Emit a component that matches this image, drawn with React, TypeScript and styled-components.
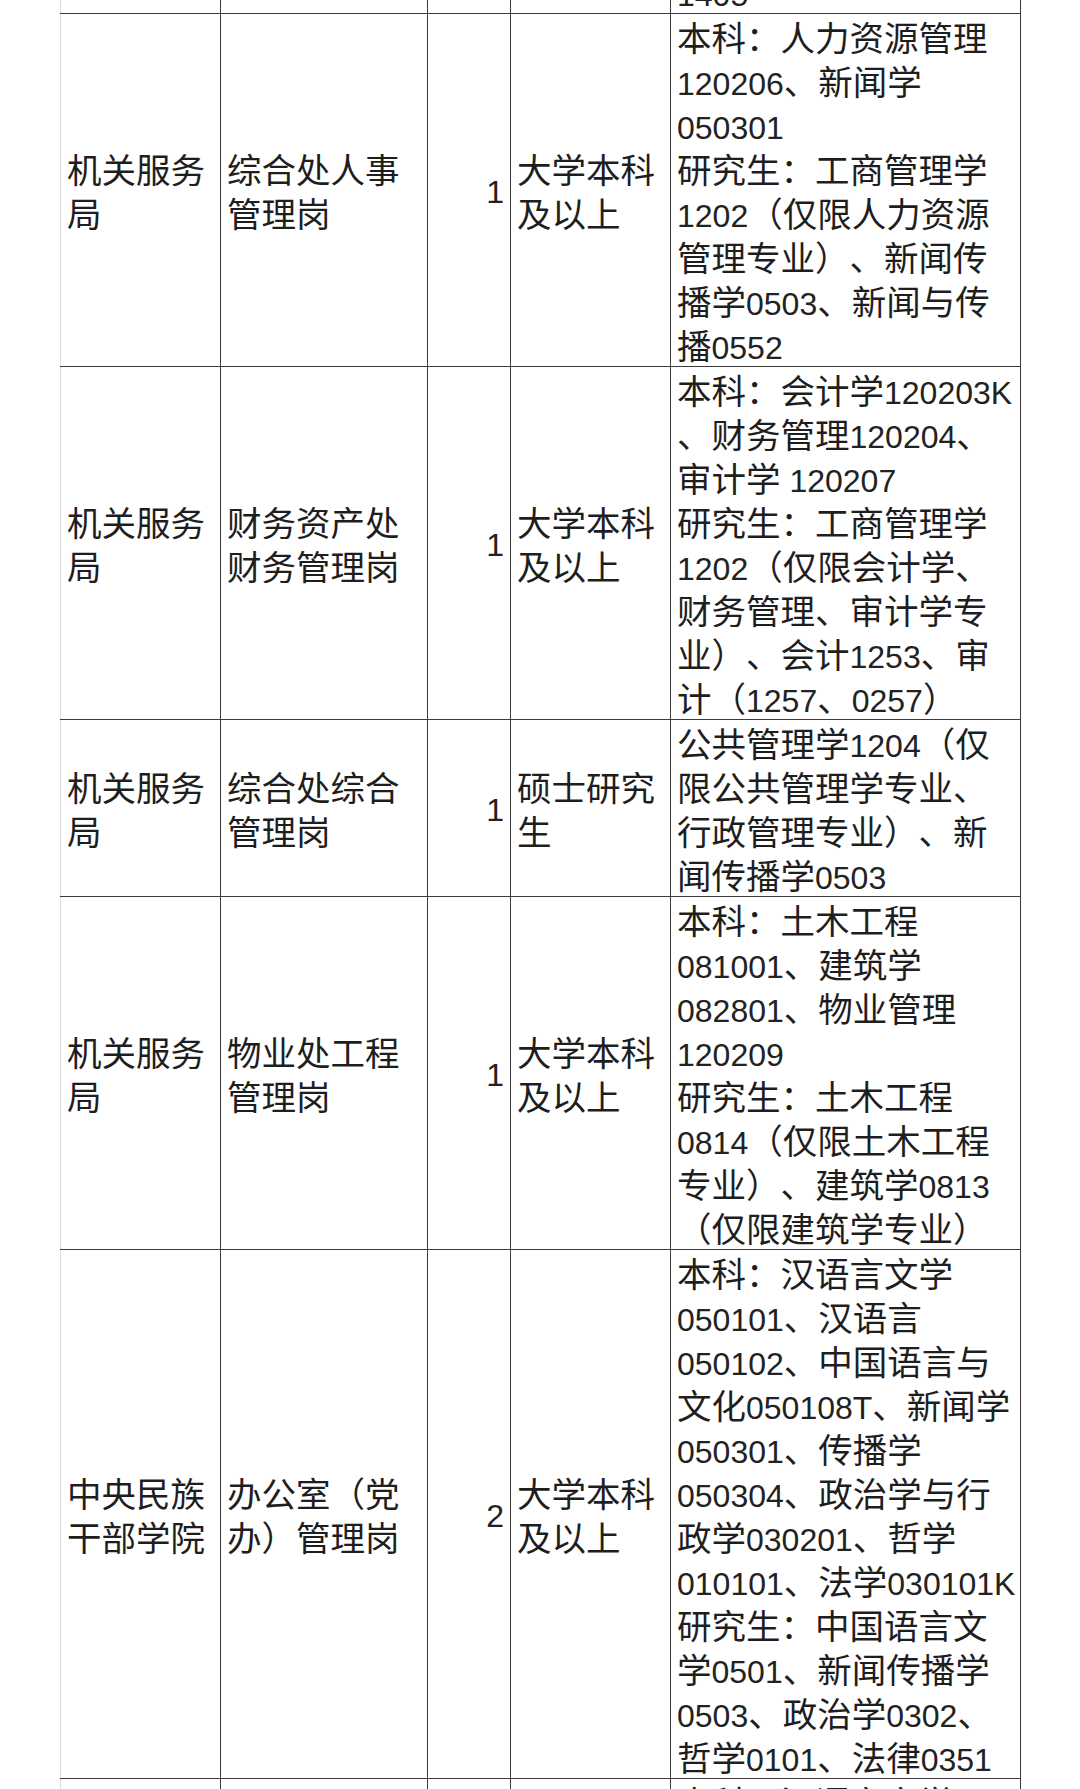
import React from 'react';
import styled, { createGlobalStyle } from 'styled-components';

const GlobalStyle = createGlobalStyle`
  html, body {
    margin: 0;
    padding: 0;
    background: #ffffff;
  }
  body {
    font-family: "Noto Sans CJK SC", "Liberation Sans", sans-serif;
    color: #1e1e1e;
  }
`;

const Page = styled.div`
  width: 1080px;
  height: 1789px;
  overflow: hidden;
  background: #ffffff;
  padding-left: 60px;
  box-sizing: border-box;
`;

const Sheet = styled.table`
  margin-top: -32px;
  width: 960px;
  table-layout: fixed;
  border-collapse: collapse;
  font-size: 34.5px;
  line-height: 44px;
  text-spacing-trim: space-all;

  td {
    border: 1px solid #3c3c3c;
    padding: 0 6px;
    vertical-align: middle;
    white-space: nowrap;
    overflow: visible;
  }

  td:first-child {
    border-left-color: #dcdcdc;
  }
`;

const Col = styled.col<{ $w: number }>`
  width: ${(p) => p.$w}px;
`;

const Cell = styled.td<{ $align?: 'left' | 'right' }>`
  text-align: ${(p) => p.$align ?? 'left'};
`;

const Line = styled.div`
  height: 44px;
`;

// digits and latin letters are set a bit smaller and thinner, like the sheet's own font
const Latin = styled.span`
  font-family: "Liberation Sans", "Noto Sans", sans-serif;
  font-size: 32px;
  color: #222;
`;

type Row = {
  org: string[];
  post: string[];
  count: string;
  edu: string[];
  major: string[];
};

const rows: Row[] = [
  {
    org: [],
    post: [],
    count: '',
    edu: [],
    major: ['1405'],
  },
  {
    org: ['机关服务', '局'],
    post: ['综合处人事', '管理岗'],
    count: '1',
    edu: ['大学本科', '及以上'],
    major: [
      '本科：人力资源管理',
      '120206、新闻学',
      '050301',
      '研究生：工商管理学',
      '1202（仅限人力资源',
      '管理专业）、新闻传',
      '播学0503、新闻与传',
      '播0552',
    ],
  },
  {
    org: ['机关服务', '局'],
    post: ['财务资产处', '财务管理岗'],
    count: '1',
    edu: ['大学本科', '及以上'],
    major: [
      '本科：会计学120203K',
      '、财务管理120204、',
      '审计学 120207',
      '研究生：工商管理学',
      '1202（仅限会计学、',
      '财务管理、审计学专',
      '业）、会计1253、审',
      '计（1257、0257）',
    ],
  },
  {
    org: ['机关服务', '局'],
    post: ['综合处综合', '管理岗'],
    count: '1',
    edu: ['硕士研究', '生'],
    major: ['公共管理学1204（仅', '限公共管理学专业、', '行政管理专业）、新', '闻传播学0503'],
  },
  {
    org: ['机关服务', '局'],
    post: ['物业处工程', '管理岗'],
    count: '1',
    edu: ['大学本科', '及以上'],
    major: [
      '本科：土木工程',
      '081001、建筑学',
      '082801、物业管理',
      '120209',
      '研究生：土木工程',
      '0814（仅限土木工程',
      '专业）、建筑学0813',
      '（仅限建筑学专业）',
    ],
  },
  {
    org: ['中央民族', '干部学院'],
    post: ['办公室（党', '办）管理岗'],
    count: '2',
    edu: ['大学本科', '及以上'],
    major: [
      '本科：汉语言文学',
      '050101、汉语言',
      '050102、中国语言与',
      '文化050108T、新闻学',
      '050301、传播学',
      '050304、政治学与行',
      '政学030201、哲学',
      '010101、法学030101K',
      '研究生：中国语言文',
      '学0501、新闻传播学',
      '0503、政治学0302、',
      '哲学0101、法律0351',
    ],
  },
  {
    org: ['中央民族', '干部学院'],
    post: ['办公室（党', '办）管理岗'],
    count: '1',
    edu: ['大学本科', '及以上'],
    major: ['本科：汉语言文学', '050101、新闻学', '050301'],
  },
];

const Text = ({ value }: { value: string }) => (
  <>
    {value.split(/([0-9A-Za-z ]+)/).map((part, i) =>
      /^[0-9A-Za-z ]+$/.test(part) ? <Latin key={i}>{part}</Latin> : part
    )}
  </>
);

const Lines = ({ items }: { items: string[] }) => (
  <>
    {items.map((t, i) => (
      <Line key={i}>
        <Text value={t} />
      </Line>
    ))}
  </>
);

export default function App() {
  return (
    <Page>
      <GlobalStyle />
      <Sheet>
        <colgroup>
          <Col $w={160} />
          <Col $w={207} />
          <Col $w={83} />
          <Col $w={160} />
          <Col $w={350} />
        </colgroup>
        <tbody>
          {rows.map((r, i) => (
            <tr key={i}>
              <Cell><Lines items={r.org} /></Cell>
              <Cell><Lines items={r.post} /></Cell>
              <Cell $align="right"><Text value={r.count} /></Cell>
              <Cell><Lines items={r.edu} /></Cell>
              <Cell><Lines items={r.major} /></Cell>
            </tr>
          ))}
        </tbody>
      </Sheet>
    </Page>
  );
}
